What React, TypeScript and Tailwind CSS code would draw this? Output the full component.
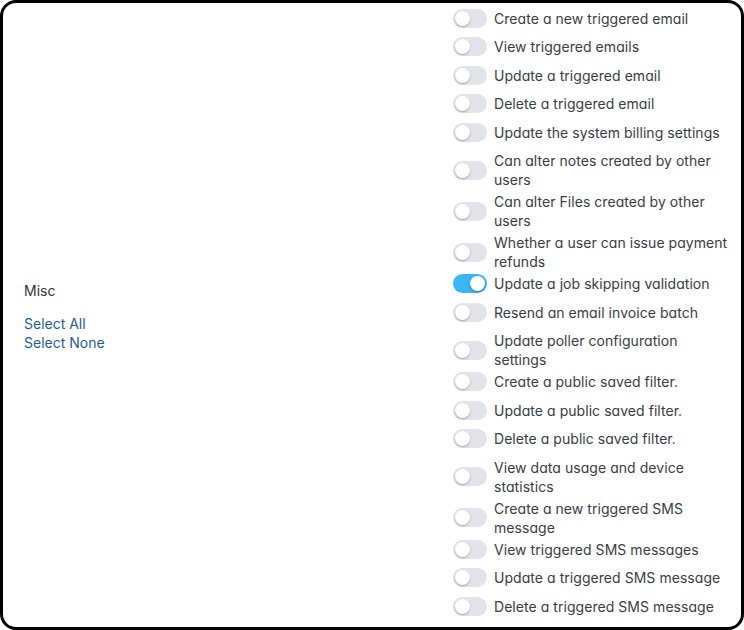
import {useState} from "react";

interface Permission {
    lines: string[];
    enabled?: boolean;
}

const permissions: Permission[] = [
    {lines: ["Create a new triggered email"]},
    {lines: ["View triggered emails"]},
    {lines: ["Update a triggered email"]},
    {lines: ["Delete a triggered email"]},
    {lines: ["Update the system billing settings"]},
    {lines: ["Can alter notes created by other", "users"]},
    {lines: ["Can alter Files created by other", "users"]},
    {lines: ["Whether a user can issue payment", "refunds"]},
    {lines: ["Update a job skipping validation"], enabled: true},
    {lines: ["Resend an email invoice batch"]},
    {lines: ["Update poller configuration", "settings"]},
    {lines: ["Create a public saved filter."]},
    {lines: ["Update a public saved filter."]},
    {lines: ["Delete a public saved filter."]},
    {lines: ["View data usage and device", "statistics"]},
    {lines: ["Create a new triggered SMS", "message"]},
    {lines: ["View triggered SMS messages"]},
    {lines: ["Update a triggered SMS message"]},
    {lines: ["Delete a triggered SMS message"]},
];

const Toggle = ({on, onClick}: { on: boolean; onClick: () => void }) => (
    <button
        onClick={onClick}
        className={`relative w-[34px] h-[19px] shrink-0 rounded-full ${on ? "bg-[#3bb5f6]" : "bg-[#e2e4e9]"}`}
    >
        <span
            className={`absolute top-[2px] h-[15px] w-[15px] rounded-full bg-white shadow-[0_1px_2px_rgba(0,0,0,0.3)] ${on ? "left-[17px]" : "left-[2px]"}`}
        />
    </button>
);

const App = () => {
    const [state, setState] = useState<boolean[]>(permissions.map(p => !!p.enabled));

    const toggle = (i: number) => setState(s => s.map((v, j) => (j === i ? !v : v)));

    return (
        <div className="w-[744px] h-[630px] bg-white font-['Inter',sans-serif]">
            <div className="flex h-full w-full overflow-hidden rounded-[16px] border-[3px] border-black">
                {/* group label */}
                <div className="flex flex-1 items-center pl-[21px]">
                    <div className="pt-[2px]">
                        <p className="text-[14px] leading-[19px] text-[#333]">Misc</p>
                        <div className="mt-[14px] flex flex-col text-[14px] leading-[19px] text-[#1f5c96]">
                            <a href="#">Select All</a>
                            <a href="#">Select None</a>
                        </div>
                    </div>
                </div>

                {/* permission toggles */}
                <div className="w-[288px] pt-[0.75px] [font-feature-settings:'cv11']">
                    {permissions.map((p, i) => (
                        <div key={i}
                             className={`flex items-start pt-[4.75px] ${p.lines.length > 1 ? "h-[41px]" : "h-[28.5px]"}`}>
                            <div className="flex items-center gap-[7px]">
                                <Toggle on={state[i]} onClick={() => toggle(i)}/>
                                <span className="text-[14px] leading-[19px] tracking-[0.05px] text-[#383c44]">
                                    {p.lines.map((l, k) => (
                                        <span key={k} className="block whitespace-nowrap">{l}</span>
                                    ))}
                                </span>
                            </div>
                        </div>
                    ))}
                </div>
            </div>
        </div>
    );
};

export default App;
